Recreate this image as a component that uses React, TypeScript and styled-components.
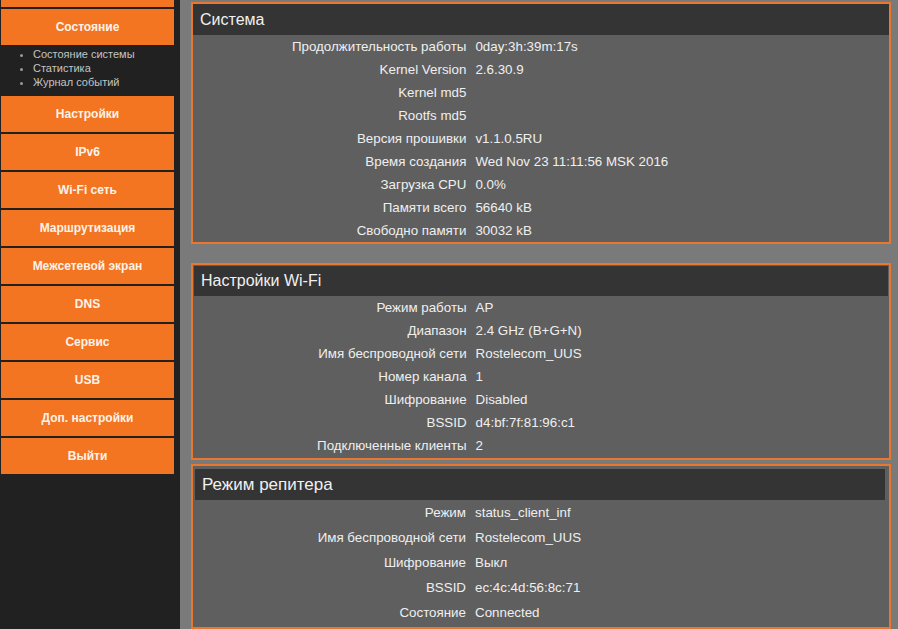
import styled, { createGlobalStyle } from "styled-components";

type Row = { label: string; value: string };

type Section = {
  title: string;
  rows: Row[];
  pad: string;
  rowHeight: number;
  titleSize: number;
  headHeight: number;
  gap: number;
};

const menu = [
  "Настройки",
  "IPv6",
  "Wi-Fi сеть",
  "Маршрутизация",
  "Межсетевой экран",
  "DNS",
  "Сервис",
  "USB",
  "Доп. настройки",
  "Выйти",
];

const sections: Section[] = [
  {
    title: "Система",
    pad: "0",
    rowHeight: 23,
    titleSize: 16,
    headHeight: 31,
    gap: 0,
    rows: [
      { label: "Продолжительность работы", value: "0day:3h:39m:17s" },
      { label: "Kernel Version", value: "2.6.30.9" },
      { label: "Kernel md5", value: "" },
      { label: "Rootfs md5", value: "" },
      { label: "Версия прошивки", value: "v1.1.0.5RU" },
      { label: "Время создания", value: "Wed Nov 23 11:11:56 MSK 2016" },
      { label: "Загрузка CPU", value: "0.0%" },
      { label: "Памяти всего", value: "56640 kB" },
      { label: "Свободно памяти", value: "30032 kB" },
    ],
  },
  {
    title: "Настройки Wi-Fi",
    pad: "1px",
    rowHeight: 23,
    titleSize: 16,
    headHeight: 30,
    gap: 19,
    rows: [
      { label: "Режим работы", value: "AP" },
      { label: "Диапазон", value: "2.4 GHz (B+G+N)" },
      { label: "Имя беспроводной сети", value: "Rostelecom_UUS" },
      { label: "Номер канала", value: "1" },
      { label: "Шифрование", value: "Disabled" },
      { label: "BSSID", value: "d4:bf:7f:81:96:c1" },
      { label: "Подключенные клиенты", value: "2" },
    ],
  },
  {
    title: "Режим репитера",
    pad: "3px 4px 2px 2px",
    rowHeight: 25,
    titleSize: 17,
    headHeight: 31,
    gap: 4,
    rows: [
      { label: "Режим", value: "status_client_inf" },
      { label: "Имя беспроводной сети", value: "Rostelecom_UUS" },
      { label: "Шифрование", value: "Выкл" },
      { label: "BSSID", value: "ec:4c:4d:56:8c:71" },
      { label: "Состояние", value: "Connected" },
    ],
  },
];

export default function App() {
  return (
    <>
      <GlobalStyle />
      <Page>
        <Sidebar>
          <NavStub />
          <NavButton>Состояние</NavButton>
          <SubMenu>
            <li>Состояние системы</li>
            <li>Статистика</li>
            <li>Журнал событий</li>
          </SubMenu>
          {menu.map((item) => (
            <NavButton key={item}>{item}</NavButton>
          ))}
        </Sidebar>
        <Main>
          {sections.map((s) => (
            <Panel key={s.title} $pad={s.pad} $gap={s.gap}>
              <PanelHead $size={s.titleSize} $h={s.headHeight}>
                {s.title}
              </PanelHead>
              <InfoTable>
                <tbody>
                  {s.rows.map((r) => (
                    <InfoRow key={r.label} $h={s.rowHeight}>
                      <Label>{r.label}</Label>
                      <Value>{r.value}</Value>
                    </InfoRow>
                  ))}
                </tbody>
              </InfoTable>
            </Panel>
          ))}
        </Main>
      </Page>
    </>
  );
}

const GlobalStyle = createGlobalStyle`
  html, body {
    margin: 0;
    padding: 0;
    height: 100%;
    overflow: hidden;
    background: #222;
    font-family: "Liberation Sans", Arial, sans-serif;
  }
  #root {
    height: 100%;
  }
`;

const Page = styled.div`
  display: flex;
  min-height: 100%;
`;

const Sidebar = styled.nav`
  width: 180px;
  flex: none;
  background: #212121;
  display: flex;
  flex-direction: column;
  gap: 2px;
`;

const NavStub = styled.div`
  width: 173px;
  margin-left: 1px;
  height: 7px;
  background: #f37521;
`;

const NavButton = styled.div`
  width: 173px;
  margin-left: 1px;
  height: 36px;
  background: #f37521;
  color: #fbf3ea;
  font-size: 12px;
  font-weight: bold;
  display: flex;
  align-items: center;
  justify-content: center;
`;

const SubMenu = styled.ul`
  margin: 0;
  padding: 0 0 5px 33px;
  list-style: disc;
  color: #c4c4c4;
  font-size: 11px;
  line-height: 14px;
  height: 42px;

  li::marker {
    color: #9a9a9a;
  }
`;

const Main = styled.main`
  flex: 1;
  background: #7a7a7a;
  padding: 2px 7px 0 11px;
  display: flex;
  flex-direction: column;
`;

const Panel = styled.section<{ $pad: string; $gap: number }>`
  border: 2px solid #e8782f;
  background: #5f5f5f;
  padding: ${(p) => p.$pad};
  margin-top: ${(p) => p.$gap}px;
`;

const PanelHead = styled.div<{ $size: number; $h: number }>`
  height: ${(p) => p.$h}px;
  background: #343434;
  color: #f0f0f0;
  font-size: ${(p) => p.$size}px;
  padding-left: 7px;
  display: flex;
  align-items: center;
`;

const InfoTable = styled.table`
  width: 100%;
  border-collapse: collapse;
  font-size: 13.35px;
  color: #efefef;
`;

const InfoRow = styled.tr<{ $h: number }>`
  height: ${(p) => p.$h}px;
`;

const Label = styled.td`
  width: 40%;
  text-align: right;
  padding: 0 5px 0 0;
  white-space: nowrap;
`;

const Value = styled.td`
  padding: 0 0 0 4px;
  white-space: nowrap;
`;
